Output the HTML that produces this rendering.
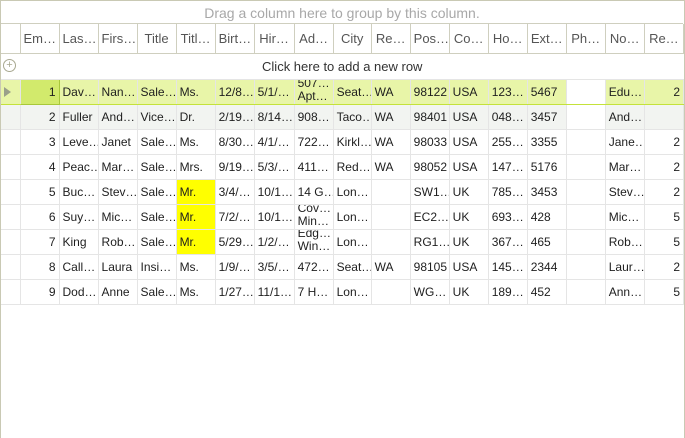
<!DOCTYPE html>
<html><head><meta charset="utf-8">
<style>
*{box-sizing:border-box;margin:0;padding:0}
html,body{width:685px;height:438px;overflow:hidden;background:#fff;font-family:"Liberation Sans",sans-serif}
.frame{position:absolute;left:0;top:0;width:685px;height:438px;border:1px solid #c9c9b4;border-bottom:none}
.group{position:absolute;left:1px;top:1px;width:682px;height:23px;text-align:center;color:#a8a8a8;font-size:14px;line-height:24px;border-bottom:1px solid #cfcfbf}
table{position:absolute;left:1px;top:24px;border-collapse:collapse;table-layout:fixed;width:683px}
td,th{overflow:hidden;white-space:nowrap;font-size:12px;color:#1e1e1e;padding:0 3px;font-weight:normal}
th{height:29px;color:#555;font-size:13px;border-right:1px solid #cfcfbf;border-bottom:1px solid #cfcfbf;text-align:center}
tr.d td{height:25px;border-right:1px solid #e5e5e5;border-bottom:1px solid #e5e5e5}
td.r{text-align:right}
tr.new td{height:26px;text-align:center;font-size:13px;color:#333;border-bottom:1px solid #e5e5e5}
tr.sel td{background:#e8f5a8;border-bottom:1px solid #c4e23a}
tr.sel td.cur{background:#d2ea6c;border:1px solid #a8c83a}
tr.alt td{background:#f2f4f1}
td.y{background:#ffff00}
td.w{background:#fff!important}
.two{line-height:13px;font-size:12px;margin-top:-4px}
.tri{display:inline-block;width:0;height:0;border-left:7px solid #9aa08a;border-top:5px solid transparent;border-bottom:5px solid transparent;vertical-align:middle}
.plus{position:absolute;left:3px;top:59px;width:13px;height:13px;border:1px solid #a8a890;border-radius:50%;color:#a8a890;font-size:11px;line-height:10px;text-align:center}
</style></head><body>
<div class="frame"></div>
<div class="group">Drag a column here to group by this column.</div>
<table>
<colgroup><col style="width:19px"><col style="width:39px"><col style="width:39px"><col style="width:39px"><col style="width:39px"><col style="width:39px"><col style="width:39px"><col style="width:40px"><col style="width:39px"><col style="width:38px"><col style="width:39px"><col style="width:39px"><col style="width:39px"><col style="width:39px"><col style="width:39px"><col style="width:39px"><col style="width:39px"><col style="width:39px"></colgroup>
<tr><th></th><th>Em…</th><th>Las…</th><th>Firs…</th><th>Title</th><th>Titl…</th><th>Birt…</th><th>Hir…</th><th>Ad…</th><th>City</th><th>Re…</th><th>Pos…</th><th>Co…</th><th>Ho…</th><th>Ext…</th><th>Ph…</th><th>No…</th><th>Re…</th></tr>
<tr class="new"><td colspan="18">Click here to add a new row</td></tr>
<tr class="d sel"><td><span class="tri"></span></td><td class="r cur">1</td><td>Dav…</td><td>Nan…</td><td>Sale…</td><td>Ms.</td><td>12/8…</td><td>5/1/…</td><td><div class="two">507…<br>Apt…</div></td><td>Seat…</td><td>WA</td><td>98122</td><td>USA</td><td>123…</td><td>5467</td><td class="w"></td><td>Edu…</td><td class="r">2</td></tr>
<tr class="d alt"><td></td><td class="r">2</td><td>Fuller</td><td>And…</td><td>Vice…</td><td>Dr.</td><td>2/19…</td><td>8/14…</td><td>908…</td><td>Taco…</td><td>WA</td><td>98401</td><td>USA</td><td>048…</td><td>3457</td><td class="w"></td><td>And…</td><td></td></tr>
<tr class="d"><td></td><td class="r">3</td><td>Leve…</td><td>Janet</td><td>Sale…</td><td>Ms.</td><td>8/30…</td><td>4/1/…</td><td>722…</td><td>Kirkl…</td><td>WA</td><td>98033</td><td>USA</td><td>255…</td><td>3355</td><td></td><td>Jane…</td><td class="r">2</td></tr>
<tr class="d"><td></td><td class="r">4</td><td>Peac…</td><td>Mar…</td><td>Sale…</td><td>Mrs.</td><td>9/19…</td><td>5/3/…</td><td>411…</td><td>Red…</td><td>WA</td><td>98052</td><td>USA</td><td>147…</td><td>5176</td><td></td><td>Mar…</td><td class="r">2</td></tr>
<tr class="d"><td></td><td class="r">5</td><td>Buc…</td><td>Stev…</td><td>Sale…</td><td class="y">Mr.</td><td>3/4/…</td><td>10/1…</td><td>14 G…</td><td>Lon…</td><td></td><td>SW1…</td><td>UK</td><td>785…</td><td>3453</td><td></td><td>Stev…</td><td class="r">2</td></tr>
<tr class="d"><td></td><td class="r">6</td><td>Suy…</td><td>Mic…</td><td>Sale…</td><td class="y">Mr.</td><td>7/2/…</td><td>10/1…</td><td><div class="two">Cov…<br>Min…</div></td><td>Lon…</td><td></td><td>EC2…</td><td>UK</td><td>693…</td><td>428</td><td></td><td>Mic…</td><td class="r">5</td></tr>
<tr class="d"><td></td><td class="r">7</td><td>King</td><td>Rob…</td><td>Sale…</td><td class="y">Mr.</td><td>5/29…</td><td>1/2/…</td><td><div class="two">Edg…<br>Win…</div></td><td>Lon…</td><td></td><td>RG1…</td><td>UK</td><td>367…</td><td>465</td><td></td><td>Rob…</td><td class="r">5</td></tr>
<tr class="d"><td></td><td class="r">8</td><td>Call…</td><td>Laura</td><td>Insi…</td><td>Ms.</td><td>1/9/…</td><td>3/5/…</td><td>472…</td><td>Seat…</td><td>WA</td><td>98105</td><td>USA</td><td>145…</td><td>2344</td><td></td><td>Laur…</td><td class="r">2</td></tr>
<tr class="d"><td></td><td class="r">9</td><td>Dod…</td><td>Anne</td><td>Sale…</td><td>Ms.</td><td>1/27…</td><td>11/1…</td><td>7 H…</td><td>Lon…</td><td></td><td>WG…</td><td>UK</td><td>189…</td><td>452</td><td></td><td>Ann…</td><td class="r">5</td></tr>
</table>
<div class="plus">+</div>
</body></html>
